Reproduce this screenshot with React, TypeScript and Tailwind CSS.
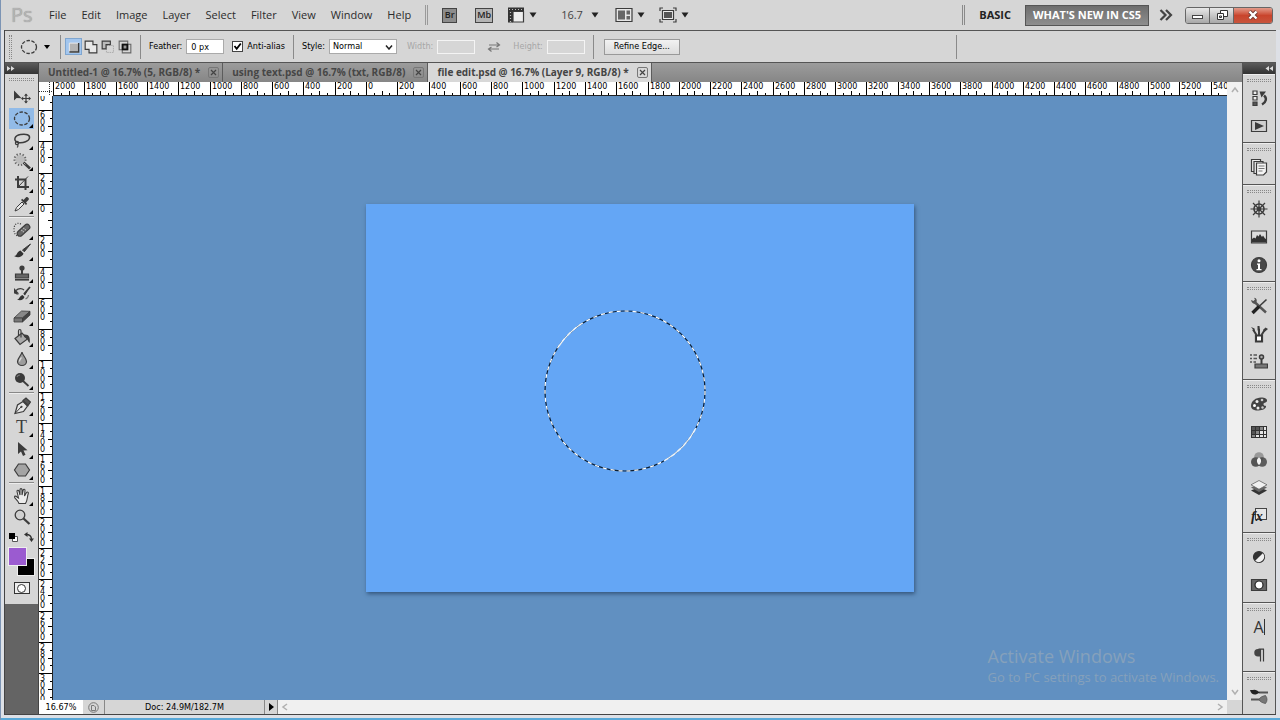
import { useLayoutEffect, useRef, useState } from "react"
import type { ReactNode } from "react"

const MENUS = ["File", "Edit", "Image", "Layer", "Select", "Filter", "View", "Window", "Help"]

const TABS = [
  "Untitled-1 @ 16.7% (5, RGB/8) *",
  "using text.psd @ 16.7% (txt, RGB/8)",
  "file edit.psd @ 16.7% (Layer 9, RGB/8) *",
]

const INK = "#3c3c3c"

function Icon({ size = 18, children }: { size?: number; children: ReactNode }) {
  return (
    <svg width={size} height={size} viewBox="0 0 18 18" fill="none" stroke={INK} strokeWidth="1.2" aria-hidden="true">
      {children}
    </svg>
  )
}

/* ---------- toolbox icons ---------- */

const toolGroups: { height: string; tools: { name: string; flyout?: boolean; icon: ReactNode }[] }[] = [
  {
    height: "h-[129px]",
    tools: [
      {
        name: "Move",
        icon: (
          <Icon>
            <path d="M1 2.5v10l2.6-2.4 5 .1z" fill={INK} stroke="none" />
            <path d="M9 10.5h8M13 6.5v8" />
            <path d="M13 5.5l-2 2.200h4zM13 15.500l-2-2.200h4zM8 10.500l2.200-2v4zM18 10.500l-2.200-2v4z" fill={INK} stroke="none" />
          </Icon>
        ),
      },
      {
        name: "Elliptical Marquee",
        flyout: true,
        icon: (
          <Icon>
            <ellipse cx="9" cy="9.500" rx="7.500" ry="6.500" strokeDasharray="3.500 1.500" strokeWidth="1.300" />
          </Icon>
        ),
      },
      {
        name: "Lasso",
        flyout: true,
        icon: (
          <Icon>
            <path d="M4.500 11.500C0 9 1.500 4.500 7.500 3.500s9.500.5 9 3.500-6 5.500-12 4.500z" strokeWidth="1.500" />
            <circle cx="4" cy="12" r="1.600" />
            <path d="M4 13.500c1.500.5 1 2 .2 3" />
          </Icon>
        ),
      },
      {
        name: "Quick Selection",
        flyout: true,
        icon: (
          <Icon>
            <circle cx="7" cy="7.500" r="4.500" fill="#bdbdbd" stroke="none" />
            <circle cx="7" cy="7.500" r="5.500" stroke="#666" strokeWidth="2" strokeDasharray="1.300 1.800" />
            <path d="M10.500 10.500l6.500 6" strokeWidth="2.600" />
            <path d="M10.500 10.500l2 2" stroke="#aaa" strokeWidth="1" />
          </Icon>
        ),
      },
      {
        name: "Crop",
        flyout: true,
        icon: (
          <Icon>
            <path d="M5 2v11h11M2 5.500h10.500V16" strokeWidth="2" />
            <path d="M5 13L15 2.500" strokeWidth="1" />
          </Icon>
        ),
      },
      {
        name: "Eyedropper",
        flyout: true,
        icon: (
          <Icon>
            <path d="M2 16l1.500-3.500 5.500-5.500 2 2-5.500 5.500z" fill="#e8e8e8" strokeWidth="1" />
            <path d="M8 5l5 5 1.200-1.200-1.200-1.300 2.700-2.800c1-1.200-1.400-3.400-2.600-2.400L10.500 5 9.200 3.800z" fill={INK} stroke="none" />
          </Icon>
        ),
      },
    ],
  },
  {
    height: "h-[172px]",
    tools: [
      {
        name: "Spot Healing Brush",
        flyout: true,
        icon: (
          <Icon>
            <path d="M8 3C3 1 1 4 1 8.500S3 15 6 15" strokeDasharray="1 1.500" />
            <rect x="3" y="6.500" width="15" height="5.500" rx="2.700" fill="#666" transform="rotate(-42 10.500 9.300)" />
            <path d="M8.500 9l2.500 2.500M10.500 7l2.500 2.500" stroke="#ccc" strokeDasharray="1 1" />
          </Icon>
        ),
      },
      {
        name: "Brush",
        flyout: true,
        icon: (
          <Icon>
            <path d="M17.500 2l-8 6 1.800 1.800z" fill={INK} strokeWidth="1" />
            <path d="M1 14c3 .3 2.700-4.500 6.500-5.500l3 3C9.500 15 5 16.500 1 14z" fill="#333" stroke="none" />
          </Icon>
        ),
      },
      {
        name: "Clone Stamp",
        flyout: true,
        icon: (
          <Icon>
            <circle cx="9" cy="4" r="2.600" fill={INK} stroke="none" />
            <path d="M8 5h2v5H8z" fill={INK} stroke="none" />
            <path d="M2.500 10h13v4h-13z" fill="#666" />
            <path d="M2 15.800h14" strokeWidth="1.600" />
          </Icon>
        ),
      },
      {
        name: "History Brush",
        flyout: true,
        icon: (
          <Icon>
            <path d="M17 2l-6.500 7 1.500 1.500zM4 14.500c2.500 0 2.500-3.800 5.500-4.500l2 2c-.8 2.800-4 4-7.500 2.500z" fill="#333" stroke="none" />
            <path d="M17 2l-6 7" strokeWidth="1.800" />
            <path d="M3 5.500C5.500 3 9 3 11 5M2 6.500c0 1.500 1.500 2.500 3.500 2.500" />
            <path d="M1 3v5.500h5z" fill={INK} stroke="none" />
            <path d="M12.500 14c2-1 3-2 3-4" stroke="#777" />
          </Icon>
        ),
      },
      {
        name: "Eraser",
        flyout: true,
        icon: (
          <Icon>
            <path d="M1 11l7.500-7 8.500.3-7.500 6.700z" fill="#888" strokeWidth=".8" />
            <path d="M1 11h8.500v4H1z" fill="#777" strokeWidth=".8" />
            <path d="M9.500 11l7.500-6.700v3.700l-7.500 7z" fill="#444" strokeWidth=".8" />
          </Icon>
        ),
      },
      {
        name: "Paint Bucket",
        flyout: true,
        icon: (
          <Icon>
            <path d="M2 10.500L9 5l5.500 6-7.500 5.500z" fill="#aaa" />
            <path d="M8 9.500V3c0-2-2.500-2-2.500 0v5" />
            <path d="M11 6.500c5-.5 6.500 3 5.700 8.500-2-1-1.700-5-5.700-6z" fill={INK} stroke="none" />
          </Icon>
        ),
      },
      {
        name: "Blur",
        flyout: true,
        icon: (
          <Icon>
            <path d="M9 2C8.500 5.500 4.500 8 4.500 11.500a4.500 4 0 009 0C13.500 8 9.500 5.500 9 2z" fill="#9c9c9c" />
            <path d="M6.500 11.500c0-1.800 1.500-3 2-4" stroke="#ddd" />
          </Icon>
        ),
      },
      {
        name: "Dodge",
        flyout: true,
        icon: (
          <Icon>
            <path d="M9.500 9.500l6 5.500" strokeWidth="1.800" />
            <circle cx="7" cy="7" r="5" fill="#3a3a3a" stroke="none" />
            <path d="M4 6c.5-1.500 1.500-2 3-2" stroke="#777" />
          </Icon>
        ),
      },
    ],
  },
  {
    height: "h-[86px]",
    tools: [
      {
        name: "Pen",
        flyout: true,
        icon: (
          <Icon>
            <path d="M2 16.500L4.500 8l5.500-3.500 4.500 4.500-4 5.500z" fill="#e6e6e6" />
            <path d="M10 3.500l3-2.500 4.500 4-2.500 3.500z" fill="#555" />
            <path d="M2 16.500l6-6.500" strokeWidth="1" />
            <circle cx="8.500" cy="9.800" r="1.100" fill={INK} stroke="none" />
          </Icon>
        ),
      },
      {
        name: "Type",
        flyout: true,
        icon: <span className="font-['Liberation_Serif',serif] text-lg leading-none text-[#3c3c3c]">T</span>,
      },
      {
        name: "Path Selection",
        flyout: true,
        icon: (
          <Icon>
            <path d="M5 2v12l3-2.600 2 4.600 2.500-1.200-2-4.300 4-.3z" fill={INK} stroke="none" />
          </Icon>
        ),
      },
      {
        name: "Polygon",
        flyout: true,
        icon: (
          <Icon>
            <path d="M5.500 3h7l4 6-4 6h-7l-4-6z" fill="#a4a4a4" />
          </Icon>
        ),
      },
    ],
  },
  {
    height: "h-[43px]",
    tools: [
      {
        name: "Hand",
        flyout: true,
        icon: (
          <Icon>
            <path
              d="M6 16.500c-1-3-4.500-5-4.500-6.500 0-1.200 1.600-1.200 2.500 0l1.500 1L4 4.500c-.2-1.400 1.500-1.700 2-.3L7 8V2.700c0-1.400 2-1.400 2 0V8l1.200-5c.4-1.200 2-.8 1.800.5L11.500 9l2-3.500c.7-1 2.300-.3 1.800 1C14 10 15 12 12.500 16.500z"
              fill="#ececec"
              strokeWidth="1.100"
            />
          </Icon>
        ),
      },
      {
        name: "Zoom",
        icon: (
          <Icon>
            <circle cx="7" cy="7" r="4.800" fill="#d0d0d0" strokeWidth="1.300" />
            <path d="M10.500 10.500l6 5.500" strokeWidth="2.300" />
          </Icon>
        ),
      },
    ],
  },
]

/* ---------- dock icons ---------- */

const dockGroups: { name: string; icon: ReactNode }[][] = [
  [
    {
      name: "History",
      icon: (
        <Icon>
          <path d="M3 2h4v3.500H3zM3 7.500h4V11H3z" fill="#eee" />
          <path d="M3 13h4v3.500H3z" fill="#555" />
          <path d="M12 15.500c4.500-2.500 5-6.500 2-9" strokeWidth="2.400" />
          <path d="M9.500 2.500h6.500l-4.500 6z" fill={INK} stroke="none" />
        </Icon>
      ),
    },
    {
      name: "Actions",
      icon: (
        <Icon>
          <path d="M1.500 3.500h15v11h-15z" fill="#cfcfcf" />
          <path d="M5 5l9 4-9 4z" fill={INK} stroke="none" />
        </Icon>
      ),
    },
  ],
  [
    {
      name: "Layer Comps",
      icon: (
        <Icon>
          <path d="M1.500 1.500h9v12h-9z" fill="#f0f0f0" />
          <path d="M4 3.500h9v12H4z" fill="#f0f0f0" />
          <path d="M6.500 5h10v9l-3 3h-7z" fill="#f4f4f4" />
          <path d="M8.500 8h6M8.500 10.500h6M8.500 13h4" stroke="#777" />
        </Icon>
      ),
    },
  ],
  [
    {
      name: "Navigator",
      icon: (
        <Icon>
          <circle cx="9" cy="9" r="5" strokeWidth="1.600" />
          <circle cx="9" cy="9" r="1.800" fill={INK} />
          <path d="M9 .5v17M.5 9h17M3 3l12 12M15 3L3 15" />
        </Icon>
      ),
    },
    {
      name: "Histogram",
      icon: (
        <Icon>
          <path d="M1.500 3h15v12h-15z" fill="#ddd" />
          <path d="M2 14.500V11l2-1.500 1.500 1L7 7l1.500 1.500L10 6l2 3 1-1.500 2 3 1 .5v3.500z" fill="#333" stroke="none" />
        </Icon>
      ),
    },
    {
      name: "Info",
      icon: (
        <Icon>
          <circle cx="9" cy="9" r="7.500" fill="#484848" />
          <circle cx="9" cy="4.800" r="1.500" fill="#fff" stroke="none" />
          <path d="M7 7.500h3V13h1.500v1.200h-5V13H8V8.700H7z" fill="#fff" stroke="none" />
        </Icon>
      ),
    },
  ],
  [
    {
      name: "Tool Presets",
      icon: (
        <Icon>
          <path d="M4 4.500l12 11" stroke="#555" strokeWidth="2.400" />
          <path d="M1 3l2.500 1L5 2.500 4 .8C7 1 7.500 4 6 6S1.500 6 1 3z" fill="#555" stroke="none" />
          <path d="M16.500 2.500l-8 7.500" strokeWidth="1.600" />
          <path d="M9 9.500L2.500 16" stroke="#222" strokeWidth="3.400" />
        </Icon>
      ),
    },
    {
      name: "Brush Presets",
      icon: (
        <Icon>
          <path d="M5.500 10h7v7h-7z" fill="#333" />
          <path d="M7 11.500h4v4H7z" fill="#fff" stroke="none" />
          <path d="M6.500 10L3 4.500M9 10V4M11.500 10L15 4.500" strokeWidth="2" />
          <path d="M1 2l3.500 1.500L5 7zM7.500 1h2l.5 4.500H7.500zM13 5l2.500-2.500L18 4l-3.500 3z" fill={INK} stroke="none" />
        </Icon>
      ),
    },
    {
      name: "Clone Source",
      icon: (
        <Icon>
          <path d="M0 2h2M0 5.500h2M0 9h2M3.500 2H7M3.500 5.500H7M3.500 9H6" stroke="#555" strokeWidth="1.500" />
          <circle cx="11.500" cy="4" r="2" fill="#aaa" strokeWidth="1.500" />
          <path d="M11.500 6v5" strokeWidth="2" />
          <path d="M5 11h12.500v4H5z" fill="#777" />
        </Icon>
      ),
    },
  ],
  [
    {
      name: "Color",
      icon: (
        <Icon>
          <path d="M1 11C1 6 6 2.500 11 2.500c4 0 6.500 1.500 6 3.500s-4 1.500-3.500 3.500 3 .5 2.500 2.500c-.7 2.500-5 3.500-8.500 3.500S1 14 1 11z" fill="#444" stroke="none" />
          <circle cx="7" cy="6.500" r="1.500" fill="#eee" stroke="none" />
          <circle cx="12" cy="5" r="1.300" fill="#ccc" stroke="none" />
          <circle cx="4.500" cy="10.500" r="1.500" fill="#fff" stroke="none" />
          <circle cx="8" cy="13" r="1.500" fill="#eee" stroke="none" />
          <circle cx="12.500" cy="12.500" r="1.200" fill="#ccc" stroke="none" />
        </Icon>
      ),
    },
    {
      name: "Swatches",
      icon: (
        <Icon>
          <path d="M1 3h16v12H1z" fill="#333" stroke="none" />
          <path d="M2 4h3v3H2zM6 4h3v3H6zM2 8h3v3H2z" fill="#555" stroke="none" />
          <path d="M10 4h3v3h-3zM6 8h3v3H6zM2 12h3v2H2z" fill="#888" stroke="none" />
          <path d="M14 4h2v3h-2zM10 8h3v3h-3zM14 8h2v3h-2zM6 12h3v2H6zM10 12h3v2h-3zM14 12h2v2h-2z" fill="#e6e6e6" stroke="none" />
        </Icon>
      ),
    },
    {
      name: "Styles",
      icon: (
        <Icon>
          <circle cx="9" cy="6" r="4.800" fill="#999" stroke="none" />
          <circle cx="5.800" cy="11" r="4.800" fill="#555" stroke="none" />
          <circle cx="12.200" cy="11" r="4.800" fill="#3f3f3f" fillOpacity=".8" stroke="none" />
          <path d="M9 6.500c3 1.500 2.500 5.500 0 7.500-2.500-2-3-6 0-7.500z" fill="#f4f4f4" stroke="none" />
        </Icon>
      ),
    },
    {
      name: "Layers",
      icon: (
        <Icon>
          <path d="M1 11.500L9 8l8 3.500L9 16z" fill="#333" stroke="none" />
          <path d="M1 8.500L9 5l8 3.500L9 13z" fill="#666" stroke="none" />
          <path d="M1 5.800L9 1.500l8 4.300-8 4.500z" fill="#f0f0f0" stroke="#666" strokeWidth=".8" />
        </Icon>
      ),
    },
    {
      name: "Layer Effects",
      icon: (
        <span className="relative block size-4">
          <span className="absolute top-0 right-0 size-3 border border-[#444] bg-[#e6e6e6]" />
          <span className="absolute bottom-0 left-0 font-['Liberation_Serif',serif] text-sm leading-none font-bold text-[#222] italic">fx</span>
        </span>
      ),
    },
  ],
  [
    {
      name: "Adjustments",
      icon: (
        <Icon>
          <circle cx="9" cy="9" r="5.500" fill="#333" stroke="#333" />
          <path d="M5.200 12.800a5.400 5.400 0 007.600-7.600z" fill="#f0f0f0" stroke="none" />
        </Icon>
      ),
    },
    {
      name: "Masks",
      icon: (
        <Icon>
          <path d="M1.500 3.500h15v11h-15z" fill="#666" />
          <circle cx="9" cy="9" r="4" fill="#fff" stroke="#222" />
        </Icon>
      ),
    },
  ],
  [
    {
      name: "Character",
      icon: (
        <span className="flex items-center text-base leading-none text-[#333]">
          A<span className="h-4 w-px bg-[#333]" />
        </span>
      ),
    },
    {
      name: "Paragraph",
      icon: (
        <Icon>
          <path d="M13.500 3v12.500M10.500 3v12.500M8.500 3.200H14" />
          <path d="M10.500 3H8a3.500 3.500 0 000 7.500h2.500z" fill="#444" stroke="none" />
        </Icon>
      ),
    },
  ],
]

const presetsIcon = (
  <Icon>
    <path d="M9 5.500h9M1 12.500h9" strokeWidth="2" stroke="#555" />
    <path d="M0 3c3 .5 4-1 7 .5l3 2-3 1.500C4 8.500 1 7 0 3z" fill="#222" stroke="none" />
    <path d="M9 12.500c1-2.500 4-3.500 6.500-4 2 2.500 2 5.500 0 8-2.500-.5-5.500-1.500-6.500-4z" fill="#777" stroke="#555" strokeWidth=".8" />
  </Icon>
)

/* ---------- small shared pieces ---------- */

function Grip() {
  return <div className="mx-1 h-[3px] border-y border-dotted border-[#888]" />
}

function Caret() {
  return (
    <svg width="8" height="6" viewBox="0 0 8 6" fill="#222" aria-hidden="true">
      <path d="M.5.5h7L4 5.500z" />
    </svg>
  )
}

function Chevron({ dir }: { dir: "up" | "down" | "left" | "right" }) {
  const paths = {
    up: "M1 6l3-4 3 4",
    down: "M1 2l3 4 3-4",
    left: "M6 1L2 4l4 3",
    right: "M2 1l4 3-4 3",
  }
  return (
    <svg width="8" height="8" viewBox="0 0 8 8" fill="none" stroke="#b0b0b0" strokeWidth="1.500" aria-hidden="true">
      <path d={paths[dir]} />
    </svg>
  )
}

function Divider() {
  return <div className="h-6 w-px shrink-0 bg-[#8a8a8a]" />
}

/* ---------- rulers: one major mark per 200 px of the document ---------- */

const QUARTER = 7.82

// marks that fall inside a strip of the given length, zero mark at `origin`
function marks(origin: number, length: number, lead: number) {
  const from = Math.ceil((-lead - origin) / QUARTER)
  const to = Math.floor((length - 1 - origin) / QUARTER)
  return Array.from({ length: Math.max(0, to - from + 1) }, (_, i) => from + i)
}

function tickLength(i: number) {
  if (i % 4 === 0) return 14
  return i % 2 === 0 ? 5 : 3
}

function useBox() {
  const ref = useRef<HTMLDivElement>(null)
  const [box, setBox] = useState({ width: 0, height: 0 })

  useLayoutEffect(() => {
    const el = ref.current
    if (!el) return
    const measure = () => setBox({ width: el.clientWidth, height: el.clientHeight })
    measure()
    const observer = new ResizeObserver(measure)
    observer.observe(el)
    return () => observer.disconnect()
  }, [])

  return { ref, ...box }
}

function HorizontalRuler() {
  const { ref, width } = useBox()
  const origin = width / 2 - 274

  return (
    <div ref={ref} className="min-w-0 flex-1 overflow-hidden">
      <svg className="block h-[14px] w-full bg-white font-['DejaVu_Sans',sans-serif] text-[8px]" shapeRendering="crispEdges">
        {marks(origin, width, 1).map((i) => {
          const x = Math.round(origin + i * QUARTER)
          return (
            <g key={i}>
              <rect x={x} y={14 - tickLength(i)} width="1" height={tickLength(i)} />
              {i % 4 === 0 && <text x={x + 2} y="7">{Math.abs(i) * 50}</text>}
            </g>
          )
        })}
        <rect x="0" y="13" width="100%" height="1" fill="#222" />
      </svg>
    </div>
  )
}

function VerticalRuler() {
  const { ref, height } = useBox()
  const origin = height / 2 - 194

  return (
    <div ref={ref} className="w-[14px] shrink-0 overflow-hidden bg-white">
      <svg width="14" height={height} className="block font-['DejaVu_Sans',sans-serif] text-[8px]" shapeRendering="crispEdges">
        {marks(origin, height, 24).map((i) => {
          const y = Math.round(origin + i * QUARTER)
          return (
            <g key={i}>
              <rect x={14 - tickLength(i)} y={y} width={tickLength(i)} height="1" />
              {i % 4 === 0 &&
                String(Math.abs(i) * 50)
                  .split("")
                  .map((digit, n) => {
                    const base = y + 8 + n * 7
                    return base > 3 && base < height + 6 ? <text key={n} x="1" y={base}>{digit}</text> : null
                  })}
            </g>
          )
        })}
        <rect x="13" y="0" width="1" height="100%" fill="#222" />
      </svg>
    </div>
  )
}

/* ---------- bars ---------- */

function MenuBar() {
  return (
    <header className="flex h-[30px] shrink-0 items-center bg-[#d6d6d6] pr-[7px] pl-[10px] text-[11px] text-[#2c2c2c]">
      <span className="w-[38px] text-xl leading-none text-[#b4b4b4] [text-shadow:0_0_1px_#888]">Ps</span>
      <nav className="flex gap-[15px]">
        {MENUS.map((m) => (
          <button key={m} type="button">{m}</button>
        ))}
      </nav>
      <div className="ml-[14px] h-5 w-[3px] border-x border-[#9a9a9a]" />

      <div className="ml-[14px] flex items-center">
        <button type="button" className="h-[15px] w-[15px] border border-[#444] bg-[#8c8c8c] text-[9px] leading-3 font-semibold text-[#222]">Br</button>
        <button type="button" className="ml-[18px] h-[15px] w-[18px] border border-[#444] bg-[#b4b4b4] text-[9px] leading-3 font-semibold text-[#222]">Mb</button>
        <button type="button" aria-label="View extras" className="ml-[14px] flex items-center gap-1">
          <Icon>
            <path d="M1 1.500h16V6H6v10.500H1z" fill="#333" stroke="none" />
            <path d="M6 5.500h10.500v10.500H6z" fill="#eee" />
            <path d="M2 3.500h15" stroke="#bbb" strokeDasharray="1 2" />
            <path d="M3.500 6v10" stroke="#bbb" strokeDasharray="1 2" />
          </Icon>
          <Caret />
        </button>
        <button type="button" className="ml-6 flex items-center gap-2 text-[#444]">
          16.7
          <Caret />
        </button>
        <button type="button" aria-label="Arrange documents" className="ml-4 flex items-center gap-1">
          <Icon>
            <path d="M1 2.500h16v13H1z" fill="#e6e6e6" />
            <path d="M3 4.500h7v9H3zM11.500 4.500H15v4h-3.500zM11.500 10H15v3.500h-3.500z" fill="#666" stroke="none" />
          </Icon>
          <Caret />
        </button>
        <button type="button" aria-label="Screen mode" className="ml-[14px] flex items-center gap-1">
          <Icon>
            <path d="M1 5V2h3M14 2h3v3M17 13v3h-3M4 16H1v-3" />
            <path d="M3.500 4.500h11v9h-11z" fill="#eee" />
            <path d="M5 6h8v6H5z" fill="#555" stroke="none" />
          </Icon>
          <Caret />
        </button>
      </div>

      <div className="ml-auto flex items-center">
        <div className="h-5 w-[3px] border-x border-[#8a8a8a]" />
        <button type="button" className="ml-[14px] font-bold text-[#222]">BASIC</button>
        <button type="button" className="ml-[14px] h-[21px] w-[124px] border border-[#555] bg-linear-to-b from-[#6e6e6e] to-[#8e8e8e] font-bold text-white">
          WHAT'S NEW IN CS5
        </button>
        <button type="button" aria-label="More workspaces" className="ml-[10px]">
          <svg width="14" height="12" viewBox="0 0 14 12" fill="none" stroke="#444" strokeWidth="2.200" aria-hidden="true">
            <path d="M1.500 1l5 5-5 5M7 1l5 5-5 5" />
          </svg>
        </button>
        <div className="ml-3 flex h-[17px] w-[88px] overflow-hidden rounded-[3px] border border-[#666]">
          <button type="button" aria-label="Minimize" className="flex w-6 items-center justify-center border-r border-[#666] bg-linear-to-b from-[#e8e8e8] to-[#a8a8a8]">
            <span className="mt-1 h-1 w-[11px] border border-[#444] bg-white" />
          </button>
          <button type="button" aria-label="Restore" className="flex w-6 items-center justify-center border-r border-[#666] bg-linear-to-b from-[#e8e8e8] to-[#a8a8a8]">
            <svg width="12" height="12" viewBox="0 0 12 12" fill="#fff" stroke="#333" aria-hidden="true">
              <path d="M4.500 1.500h7v6h-7z" />
              <path d="M1.500 4.500h6v6h-6z" />
              <path d="M3.500 7h2v1.500h-2z" />
            </svg>
          </button>
          <button type="button" aria-label="Close" className="flex flex-1 items-center justify-center bg-linear-to-b from-[#e29a8a] via-[#c9442c] to-[#c8543c]">
            <svg width="12" height="10" viewBox="0 0 12 10" aria-hidden="true">
              <path d="M2.500 1.500l7 7M9.500 1.500l-7 7" stroke="#6d3a34" strokeWidth="4" />
              <path d="M2.500 1.500l7 7M9.500 1.500l-7 7" stroke="#fff" strokeWidth="2.400" />
            </svg>
          </button>
        </div>
      </div>
    </header>
  )
}

function OptionsBar() {
  return (
    <div className="flex h-8 shrink-0 items-center border-t border-[#555] bg-[#d6d6d6] pl-1 font-['DejaVu_Sans_Condensed','DejaVu_Sans',sans-serif] text-[9px] text-black">
      <div className="h-6 w-[3px] border-x border-dotted border-[#888]" />
      <button type="button" aria-label="Tool preset" className="ml-2 flex items-center gap-[6px]">
        <Icon>
          <ellipse cx="9" cy="9" rx="7.500" ry="6.500" strokeDasharray="3.500 1.500" strokeWidth="1.300" />
        </Icon>
        <svg width="6" height="4" viewBox="0 0 6 4" aria-hidden="true"><path d="M0 0h6L3 4z" /></svg>
      </button>
      <div className="ml-[10px]"><Divider /></div>

      <div className="ml-1 flex items-center gap-px">
        <button type="button" aria-label="New selection" className="flex size-[17px] items-center justify-center border border-[#7fa6d0] bg-[#a3c6ee]">
          <Icon size={14}>
            <path d="M3 4h12v12H3z" fill="#b4b4b4" stroke="#eee" />
            <path d="M3 15.500h12V4" strokeWidth="1.800" />
          </Icon>
        </button>
        <button type="button" aria-label="Add to selection" className="flex size-4 items-center justify-center">
          <Icon size={14}><path d="M1.500 1.500h10V6h5v10.500h-10v-4.500h-5z" fill="#e8e8e8" strokeWidth="1.500" /></Icon>
        </button>
        <button type="button" aria-label="Subtract from selection" className="flex size-4 items-center justify-center">
          <Icon size={14}>
            <path d="M7 7h9v9H7z" stroke="#aaa" strokeDasharray="2 1" />
            <path d="M1.500 1.500H12V6H6.500v5.500h-5z" fill="#bbb" strokeWidth="1.500" />
          </Icon>
        </button>
        <button type="button" aria-label="Intersect with selection" className="flex size-4 items-center justify-center">
          <Icon size={14}>
            <path d="M1.500 1.500h11v11h-11zM5.500 5.500h11v11h-11z" stroke="#666" strokeWidth="1.400" />
            <path d="M6 6h6v6H6z" fill="#999" stroke="#111" strokeWidth="2.400" />
          </Icon>
        </button>
      </div>
      <div className="ml-[7px]"><Divider /></div>

      <label className="ml-2 flex items-center gap-1">
        Feather:
        <input type="text" defaultValue="0 px" className="h-[15px] w-[38px] border border-[#aaa] bg-white px-1" />
      </label>
      <label className="ml-2 flex items-center gap-1">
        <span className="relative flex">
          <input type="checkbox" defaultChecked className="peer size-[11px] appearance-none border border-[#444] bg-white" />
          <svg className="pointer-events-none absolute inset-0 hidden peer-checked:block" width="11" height="11" viewBox="0 0 11 11" fill="none" stroke="#000" strokeWidth="1.800" aria-hidden="true">
            <path d="M2.500 5l2.200 2.800L8.800 2.500" />
          </svg>
        </span>
        Anti-alias
      </label>
      <div className="ml-2"><Divider /></div>

      <label className="ml-2 flex items-center gap-1">
        Style:
        <span className="relative">
          <select defaultValue="Normal" className="block h-[15px] w-[68px] appearance-none border border-[#aaa] bg-white pl-[3px] leading-none">
            <option>Normal</option>
            <option>Fixed Ratio</option>
            <option>Fixed Size</option>
          </select>
          <svg className="pointer-events-none absolute top-[6px] right-1" width="8" height="5" viewBox="0 0 8 5" fill="none" stroke="#222" strokeWidth="1.500" aria-hidden="true">
            <path d="M1 .5l3 3.500L7 .5" />
          </svg>
        </span>
      </label>
      <label className="ml-[10px] flex items-center gap-1 text-[#a6a6a6]">
        Width:
        <input type="text" disabled className="h-[14px] w-[38px] border border-[#f4f4f4]" />
      </label>
      <button type="button" disabled aria-label="Swap width and height" className="mx-3">
        <svg width="14" height="10" viewBox="0 0 14 10" fill="none" stroke="#777" strokeWidth="1.200" aria-hidden="true">
          <path d="M2 3h10M9.500.5L12.500 3l-3 2M12 7H2M4.500 5L1.500 7l3 2.500" />
        </svg>
      </button>
      <label className="flex items-center gap-1 text-[#a6a6a6]">
        Height:
        <input type="text" disabled className="h-[14px] w-[38px] border border-[#f4f4f4]" />
      </label>
      <div className="ml-2"><Divider /></div>
      <button type="button" className="ml-[10px] h-4 w-[76px] border border-[#999] bg-linear-to-b from-[#f2f2f2] to-[#dcdcdc]">Refine Edge...</button>
      <div className="mr-[319px] ml-auto"><Divider /></div>
    </div>
  )
}

function Toolbox({ active, onSelect }: { active: string; onSelect: (name: string) => void }) {
  return (
    <aside className="flex w-[34px] shrink-0 flex-col border-r border-[#444] bg-[#646464]">
      <div className="flex h-[11px] items-center bg-linear-to-b from-[#5c5c5c] to-[#333] pl-[2px]">
        <svg width="8" height="5" viewBox="0 0 8 5" fill="#ddd" aria-hidden="true"><path d="M0 0l3.500 2.500L0 5zM4 0l3.500 2.500L4 5z" /></svg>
      </div>
      <div className="bg-[#d6d6d6] pb-[10px]">
        <div className="h-3 pt-1"><Grip /></div>
        {toolGroups.map((group, g) => (
          <div key={g}>
            {g > 0 && <div className="mx-1 my-px h-[2px] border-b border-[#eee] bg-[#888]" />}
            <div className={`grid auto-rows-fr px-1 ${group.height}`}>
              {group.tools.map((tool) => (
                <button
                  key={tool.name}
                  type="button"
                  aria-label={tool.name}
                  onClick={() => onSelect(tool.name)}
                  className={`relative flex items-center justify-center ${active === tool.name ? "bg-[#92bbe8]" : ""}`}
                >
                  {tool.icon}
                  {tool.flyout && (
                    <svg className="absolute right-px bottom-px" width="4" height="4" viewBox="0 0 4 4" aria-hidden="true"><path d="M4 0v4H0z" /></svg>
                  )}
                </button>
              ))}
            </div>
          </div>
        ))}
        <div className="flex h-[18px] items-center justify-between px-1">
          <svg width="9" height="9" viewBox="0 0 9 9" aria-hidden="true">
            <path d="M3.500 3.500h5v5h-5z" fill="#fff" stroke="#555" />
            <path d="M0 0h6v6H0z" />
          </svg>
          <svg width="10" height="10" viewBox="0 0 10 10" fill="none" stroke="#333" strokeWidth="1.400" aria-hidden="true">
            <path d="M2 2.500c4 0 5.500 1.500 5.500 5" />
            <path d="M3.500 0v5L0 2.500zM5 6.500h5L7.500 10z" fill="#333" stroke="none" />
          </svg>
        </div>
        <div className="relative mx-[3px] mt-px h-[29px]">
          <button type="button" aria-label="Background color" className="absolute right-0 bottom-0 size-[18px] border border-[#eee] bg-black" />
          <button type="button" aria-label="Foreground color" className="absolute top-0 left-0 size-[19px] border border-[#eee] bg-[#9b5bd0]" />
        </div>
        <button type="button" aria-label="Quick mask" className="mx-auto mt-[6px] flex h-3 w-4 items-center justify-center border border-[#333] bg-[#eee]">
          <span className="size-[9px] rounded-full border border-[#333] bg-white" />
        </button>
      </div>
    </aside>
  )
}

function Dock() {
  return (
    <aside className="flex w-[34px] shrink-0 flex-col border-x border-[#555] bg-[#d6d6d6]">
      <div className="flex h-[11px] shrink-0 items-center justify-end bg-linear-to-b from-[#5c5c5c] to-[#333] pr-[2px]">
        <svg width="8" height="5" viewBox="0 0 8 5" fill="#ddd" aria-hidden="true"><path d="M4 0L.5 2.500 4 5zM8 0L4.500 2.500 8 5z" /></svg>
      </div>
      <div className="flex h-[598px] shrink-0 flex-col">
        {dockGroups.map((group, g) => (
          <div key={g} className="grow border-b border-[#555]">
            <div className="h-[10px] border-t border-[#eee] pt-1"><Grip /></div>
            {group.map((panel) => (
              <button key={panel.name} type="button" aria-label={panel.name} className="flex h-7 w-full items-center justify-center">
                {panel.icon}
              </button>
            ))}
          </div>
        ))}
      </div>
      <div className="flex-1">
        <div className="h-[10px] border-t border-[#eee] pt-1"><Grip /></div>
        <button type="button" aria-label="Brush settings" className="flex h-7 w-full items-center justify-center">{presetsIcon}</button>
      </div>
    </aside>
  )
}

function DocumentTabs({ active, onSelect }: { active: number; onSelect: (i: number) => void }) {
  return (
    <div className="flex h-[19px] shrink-0 bg-linear-to-b from-[#9c9c9c] to-[#868686] text-[10px] font-bold">
      {TABS.map((title, i) => (
        <div
          key={title}
          className={`flex items-center gap-2 border-r border-[#5c5c5c] pr-[3px] pl-[9px] ${i === active ? "bg-[#d8d8d8] text-[#444]" : "text-[#464646]"}`}
        >
          <button type="button" onClick={() => onSelect(i)}>{title}</button>
          <button type="button" aria-label="Close tab" className="flex size-[11px] items-center justify-center rounded-xs border border-[#777]">
            <svg width="7" height="7" viewBox="0 0 7 7" stroke="#444" strokeWidth="1.200" aria-hidden="true"><path d="M1 1l5 5M6 1L1 6" /></svg>
          </button>
        </div>
      ))}
    </div>
  )
}

function Selection() {
  return (
    <svg className="h-full w-full" viewBox="0 0 548 388" fill="none" strokeWidth="1.200" aria-hidden="true">
      <circle cx="259" cy="187" r="80" stroke="#0b1e33" />
      <circle cx="259" cy="187" r="80" stroke="#fff" strokeDasharray="4 4" />
      <path d="M193 142a80 80 0 0122-22M330 224a80 80 0 01-32 33" stroke="#e8f4ff" strokeWidth="1.400" />
    </svg>
  )
}

function StatusBar() {
  return (
    <footer className="flex h-[14px] shrink-0 bg-[#d6d6d6] font-['DejaVu_Sans_Condensed','DejaVu_Sans',sans-serif] text-[9px] leading-[14px]">
      <input aria-label="Zoom level" type="text" defaultValue="16.67%" className="w-11 bg-white text-center" />
      <div className="flex w-[22px] items-center justify-center border-r border-[#888]">
        <svg width="11" height="11" viewBox="0 0 11 11" fill="none" stroke="#777" aria-hidden="true">
          <circle cx="5.500" cy="5.500" r="4.800" />
          <path d="M3.500 8.500v-5h2.500l1.500 1.500v3.500z" />
        </svg>
      </div>
      <div className="w-[160px] border-r border-[#888] text-center">Doc: 24.9M/182.7M</div>
      <button type="button" aria-label="Status options" className="flex w-[13px] items-center justify-center border-r border-[#888]">
        <svg width="5" height="8" viewBox="0 0 5 8" aria-hidden="true"><path d="M0 0l5 4-5 4z" /></svg>
      </button>
      <div className="flex flex-1 items-center justify-between bg-[#f0f0f0] px-[3px]">
        <button type="button" aria-label="Scroll left"><Chevron dir="left" /></button>
        <button type="button" aria-label="Scroll right"><Chevron dir="right" /></button>
      </div>
      <div className="w-[15px]" />
    </footer>
  )
}

export default function App() {
  const [tool, setTool] = useState("Elliptical Marquee")
  const [tab, setTab] = useState(2)

  return (
    <div className="flex h-screen flex-col overflow-hidden border-l border-[#7c94b4] bg-[#dde0e6] font-['Open_Sans','Noto_Sans',sans-serif]">
      <MenuBar />
      <div className="mr-1 ml-[3px] flex min-h-0 flex-1 flex-col border-b border-l border-[#444]">
        <OptionsBar />
        <div className="flex min-h-0 flex-1 border-t border-[#555]">
          <Toolbox active={tool} onSelect={setTool} />

          <main className="flex min-w-0 flex-1 flex-col">
            <DocumentTabs active={tab} onSelect={setTab} />
            <div className="flex min-h-0 flex-1">
              <div className="flex min-w-0 flex-1 flex-col">
                <div className="flex h-[14px] shrink-0">
                  <div className="w-[14px] shrink-0 bg-white">
                    <svg width="14" height="14" viewBox="0 0 14 14" stroke="#333" strokeDasharray="1 1" aria-hidden="true">
                      <path d="M10.500 0v14M0 9.500h14" />
                    </svg>
                  </div>
                  <HorizontalRuler />
                </div>
                <div className="flex min-h-0 flex-1">
                  <VerticalRuler />
                  <div className="relative flex min-w-0 flex-1 items-center justify-center bg-[#6190c1]">
                    <div className="h-[388px] w-[548px] bg-[#64a6f5] shadow-[1px_2px_4px_#34567c]">
                      <Selection />
                    </div>
                    <div className="absolute right-2 bottom-[14px] text-[#86a1bb]">
                      <p className="text-lg leading-6">Activate Windows</p>
                      <p className="text-[13px] leading-[18px]">Go to PC settings to activate Windows.</p>
                    </div>
                  </div>
                </div>
              </div>
              <div className="flex w-[15px] shrink-0 flex-col items-center justify-between bg-[#f0f0f0] py-1">
                <button type="button" aria-label="Scroll up" className="flex"><Chevron dir="up" /></button>
                <button type="button" aria-label="Scroll down" className="flex"><Chevron dir="down" /></button>
              </div>
            </div>
            <StatusBar />
          </main>

          <Dock />
        </div>
      </div>
      <div className="h-[5px] shrink-0 border-b-2 border-[#58a8d8]" />
    </div>
  )
}
